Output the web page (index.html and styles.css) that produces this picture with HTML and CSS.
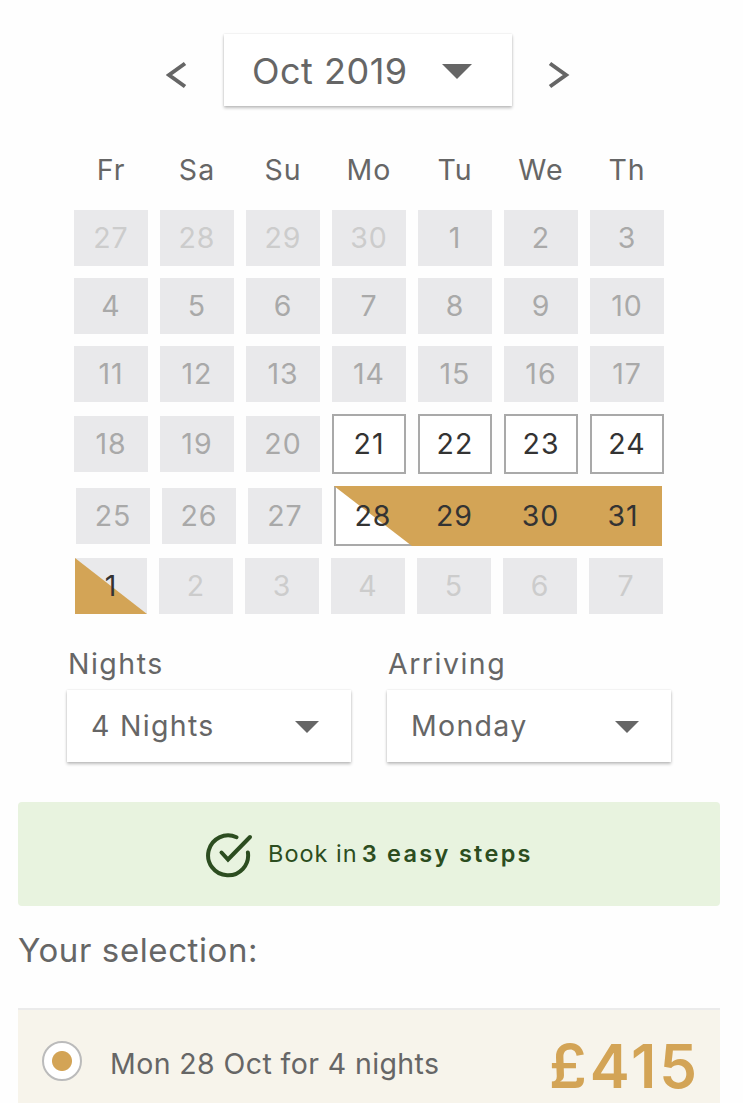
FILE: index.html
```html
<!DOCTYPE html>
<html lang="en">
<head>
    <meta charset="UTF-8">
    <meta name="viewport" content="width=device-width, initial-scale=1.0">
    <title>Availability</title>
    <link rel="stylesheet" href="styles.css">
</head>
<body>
    <div class="month-nav">
        <svg class="arrow" width="22" height="28" viewBox="0 0 22 28"><path d="M19 2.5 L3 14 L19 25.5"/></svg>
        <div class="select month">
            <span>Oct 2019</span>
            <svg class="caret" width="30" height="15" viewBox="0 0 30 15"><path d="M0 0H30L15 15Z"/></svg>
        </div>
        <svg class="arrow" width="22" height="28" viewBox="0 0 22 28"><path d="M2 2.5 L18 14 L2 25.5"/></svg>
    </div>

    <div class="calendar">
        <div class="week weekdays">
            <span>Fr</span><span>Sa</span><span>Su</span><span>Mo</span><span>Tu</span><span>We</span><span>Th</span>
        </div>
        <div class="week">
            <div class="day other">27</div>
            <div class="day other">28</div>
            <div class="day other">29</div>
            <div class="day other">30</div>
            <div class="day">1</div>
            <div class="day">2</div>
            <div class="day">3</div>
        </div>
        <div class="week">
            <div class="day">4</div>
            <div class="day">5</div>
            <div class="day">6</div>
            <div class="day">7</div>
            <div class="day">8</div>
            <div class="day">9</div>
            <div class="day">10</div>
        </div>
        <div class="week">
            <div class="day">11</div>
            <div class="day">12</div>
            <div class="day">13</div>
            <div class="day">14</div>
            <div class="day">15</div>
            <div class="day">16</div>
            <div class="day">17</div>
        </div>
        <div class="week">
            <div class="day">18</div>
            <div class="day">19</div>
            <div class="day">20</div>
            <div class="day available">21</div>
            <div class="day available">22</div>
            <div class="day available">23</div>
            <div class="day available">24</div>
        </div>
        <div class="week booked-week">
            <div class="day">25</div>
            <div class="day">26</div>
            <div class="day">27</div>
            <div class="range">
                <div class="day check-in"><span>28</span></div>
                <div class="day">29</div>
                <div class="day">30</div>
                <div class="day">31</div>
            </div>
        </div>
        <div class="week last-week">
            <div class="day check-out"><span>1</span></div>
            <div class="day other">2</div>
            <div class="day other">3</div>
            <div class="day other">4</div>
            <div class="day other">5</div>
            <div class="day other">6</div>
            <div class="day other">7</div>
        </div>
    </div>

    <div class="filters">
        <div class="filter">
            <div class="label">Nights</div>
            <div class="select">
                <span>4 Nights</span>
                <svg class="caret" width="24" height="12" viewBox="0 0 24 12"><path d="M0 0H24L12 12Z"/></svg>
            </div>
        </div>
        <div class="filter">
            <div class="label">Arriving</div>
            <div class="select">
                <span>Monday</span>
                <svg class="caret" width="24" height="12" viewBox="0 0 24 12"><path d="M0 0H24L12 12Z"/></svg>
            </div>
        </div>
    </div>

    <div class="banner">
        <svg class="tick" width="48" height="48" viewBox="0 0 48 48">
            <path d="M31.5 6.2 A20 20 0 1 0 42.9 21.5"/>
            <path d="M16.5 21.5 L23 28.5 L45 6"/>
        </svg>
        <span class="book-in">Book in</span>
        <strong>3 easy steps</strong>
    </div>

    <h2>Your selection:</h2>

    <div class="selection">
        <span class="radio"></span>
        <span class="stay">Mon 28 Oct for 4 nights</span>
        <span class="price">£415</span>
    </div>
</body>
</html>
```
FILE: styles.css
```css
* {
    box-sizing: border-box;
}
body {
    width: 743px;
    height: 1103px;
    margin: 0;
    padding: 34px 23px 0 18px;
    overflow: hidden;
    background: #fefefe;
    color: #666;
    font-family: Inter, Roboto, sans-serif;
    font-size: 28.5px;
}
.month-nav {
    display: flex;
    align-items: center;
    justify-content: space-between;
    width: 404px;
    height: 72px;
    margin-left: 148px;
}
.arrow {
    margin-top: 9px;
    fill: none;
    stroke: #666;
    stroke-width: 4;
}
.select {
    display: flex;
    align-items: center;
    justify-content: space-between;
    width: 284px;
    height: 72px;
    padding: 0 32px 0 24px;
    background: #fff;
    box-shadow: 0 2px 3px rgba(0, 0, 0, .25), 0 0 2px rgba(0, 0, 0, .1);
    letter-spacing: 1.3px;
}
.select span {
    margin-top: -2px;
}
.month {
    width: 288px;
    padding: 0 40px 0 28px;
    font-size: 36px;
    letter-spacing: .5px;
}
.month span {
    margin-top: 1px;
}
.caret {
    fill: #666;
    margin-top: 2px;
}
.calendar {
    margin: 42px 0 0 56px;
    display: flex;
    flex-direction: column;
    gap: 12px;
}
.week {
    display: grid;
    grid-template-columns: repeat(7, 74px);
    column-gap: 12px;
    align-items: center;
    letter-spacing: 1px;
}
.weekdays {
    height: 50px;
    line-height: 44px;
    text-align: center;
    align-items: start;
}
.day {
    height: 56px;
    line-height: 56px;
    text-align: center;
    background: #e9e9eb;
    color: #a9a9a9;
}
.other {
    color: #ccc;
}
.available {
    height: 60px;
    border: 2px solid #a9a9a9;
    background: #fff;
    color: #333;
}
.booked-week {
    grid-template-columns: repeat(3, 74px) 328px;
    padding-left: 2px;
}
.range {
    display: grid;
    grid-template-columns: 78px 85px 87px 78px;
    height: 60px;
    background: #d3a456;
}
.range .day {
    height: 60px;
    line-height: 60px;
    background: none;
    color: #333;
}
.range .check-in {
    position: relative;
    background: #fff;
    box-shadow: inset 2px -2px #a9a9a9;
}
.check-in::before,
.check-out::before {
    content: "";
    position: absolute;
    inset: 0;
    background: #d3a456;
    clip-path: polygon(0 0, 100% 0, 100% 100%);
}
.check-in span,
.check-out span {
    position: relative;
}
.last-week {
    grid-template-columns: 72px repeat(6, 74px);
    padding-left: 1px;
}
.last-week .check-out {
    position: relative;
    color: #333;
}
.check-out::before {
    clip-path: polygon(0 0, 100% 100%, 0 100%);
}
.filters {
    display: flex;
    gap: 36px;
    margin: 28px 0 0 49px;
}
.label {
    height: 48px;
    line-height: 44px;
    padding-left: 1px;
    letter-spacing: 1.5px;
}
.banner {
    display: flex;
    align-items: center;
    height: 104px;
    margin-top: 40px;
    padding-left: 187px;
    border-radius: 4px;
    background: #e8f3df;
    color: #2c4d20;
    font-size: 23.5px;
}
.tick {
    margin-top: 1px;
    fill: none;
    stroke: #2c4d20;
    stroke-width: 4;
    stroke-linecap: round;
}
.book-in,
.banner strong {
    margin-top: -2px;
}
.book-in {
    margin-left: 15px;
    letter-spacing: 1px;
}
.banner strong {
    margin-left: 4px;
    font-weight: 600;
    letter-spacing: 2.3px;
}
h2 {
    height: 102px;
    margin: 0;
    font-size: 33px;
    font-weight: 400;
    line-height: 88px;
    letter-spacing: .6px;
}
.selection {
    display: flex;
    align-items: center;
    height: 110px;
    border-top: 2px solid #ebebeb;
    background: #f7f4eb;
    padding: 0 20px 0 24px;
}
.radio {
    width: 40px;
    height: 40px;
    border: 2px solid #bbb;
    border-radius: 50%;
    background: radial-gradient(circle, #d3a456 9.5px, #fff 10.5px);
    margin-bottom: 6px;
}
.stay {
    margin: -2px 0 0 28px;
    letter-spacing: .4px;
}
.price {
    margin: 3px 0 0 auto;
    color: #d3a456;
    font-size: 60px;
    font-weight: 600;
    letter-spacing: 3px;
}
```
